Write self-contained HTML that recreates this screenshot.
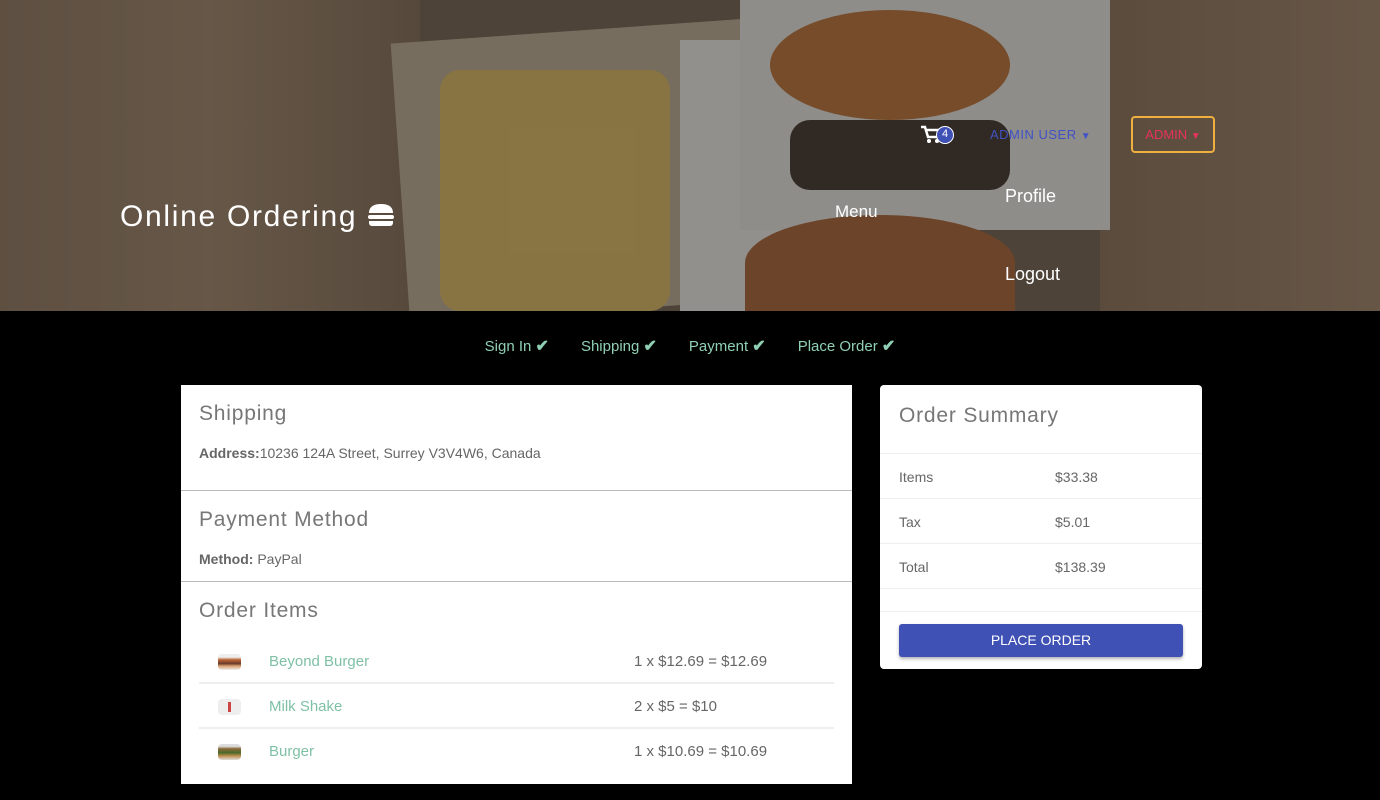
<!DOCTYPE html>
<html><head><meta charset="utf-8"><style>
*{box-sizing:border-box;margin:0;padding:0}
body{width:1380px;height:800px;background:#000;font-family:"Liberation Sans",sans-serif;overflow:hidden;position:relative}
.hero{position:absolute;left:0;top:0;width:1380px;height:311px;overflow:hidden;background:#6e5a45}
.hero div{position:absolute}
.ov{inset:0;background:rgba(40,40,40,.45)}
.nav{position:absolute;color:#fff;font-size:19px}
.steps{position:absolute;top:336px;left:0;width:1380px;text-align:center;color:#8fd0b4;font-size:15px}
.steps span{margin:0 16px}
.steps b{font-size:16px}
.card{position:absolute;background:#fff;color:#777}
h2{font-weight:normal;font-size:21px;color:#777;letter-spacing:.8px}
.row{position:absolute;left:0;width:100%;font-size:15px;color:#666}
</style></head><body>
<div class="hero">
<div style="left:0;top:0;width:420px;height:311px;background:linear-gradient(90deg,#8a7057,#9a7e62 50%,#7d654d)"></div>
<div style="left:1100px;top:0;width:280px;height:311px;background:linear-gradient(90deg,#85694f,#9b7d60)"></div>
<div style="left:400px;top:30px;width:380px;height:281px;background:#b9a68a;transform:rotate(-4deg)"></div>
<div style="left:440px;top:70px;width:230px;height:241px;background:#d8b25a;border-radius:20px"></div>
<div style="left:680px;top:40px;width:110px;height:271px;background:#e8e6df"></div>
<div style="left:740px;top:0;width:370px;height:230px;background:#e2e0da"></div>
<div style="left:770px;top:10px;width:240px;height:110px;background:#b66b2c;border-radius:50%"></div>
<div style="left:790px;top:120px;width:220px;height:70px;background:#3a2a22;border-radius:20px"></div>
<div style="left:745px;top:215px;width:270px;height:96px;background:#a55c2a;border-radius:50% 50% 0 0"></div>
<div class="ov"></div>
</div>
<div class="nav" style="left:120px;top:200px;font-size:30px;letter-spacing:1.7px">Online Ordering <svg width="28" height="24" viewBox="0 0 28 24" style="vertical-align:-1px"><path d="M2 10C2 3 8 1 14 1s12 2 12 9z" fill="#fff"/><rect x="1" y="12" width="26" height="4" rx="2" fill="#fff"/><path d="M2 18h24v2a3 3 0 0 1-3 3H5a3 3 0 0 1-3-3z" fill="#fff"/></svg></div>
<div class="nav" style="left:835px;top:202px;font-size:17px">Menu</div>
<div class="nav" style="left:1005px;top:186px;font-size:18px">Profile</div>
<div class="nav" style="left:1005px;top:264px;font-size:18px">Logout</div>
<svg style="position:absolute;left:921px;top:125px" width="20" height="20" viewBox="0 0 20 20"><path d="M0 2h4l3 10h10l2-7H6" fill="none" stroke="#fff" stroke-width="2.5"/><circle cx="8" cy="16" r="2" fill="#fff"/><circle cx="16" cy="16" r="2" fill="#fff"/></svg>
<div style="position:absolute;left:936px;top:126px;width:18px;height:18px;border-radius:50%;background:#3f51b5;border:1.5px solid #fff;color:#fff;font-size:11px;text-align:center;line-height:15px">4</div>
<div style="position:absolute;left:990px;top:127px;color:#4052c4;font-size:13px;letter-spacing:.5px">ADMIN USER <span style="font-size:10px">▼</span></div>
<div style="position:absolute;left:1131px;top:116px;width:84px;height:37px;border:2px solid #f0b040;border-radius:4px;color:#e8335a;font-size:13px;text-align:center;line-height:33px">ADMIN <span style="font-size:10px">▼</span></div>
<div class="steps"><span>Sign In <b>✔</b></span><span>Shipping <b>✔</b></span><span>Payment <b>✔</b></span><span>Place Order <b>✔</b></span></div>
<div class="card" style="left:181px;top:385px;width:671px;height:399px">
<h2 style="position:absolute;left:18px;top:17px">Shipping</h2>
<div class="row" style="left:18px;top:60px;font-size:14px"><b>Address:</b>10236 124A Street, Surrey V3V4W6, Canada</div>
<div style="position:absolute;left:0;top:105px;width:100%;border-top:1px solid #bbb"></div>
<h2 style="position:absolute;left:18px;top:123px">Payment Method</h2>
<div class="row" style="left:18px;top:166px;font-size:14px"><b>Method:</b> PayPal</div>
<div style="position:absolute;left:0;top:196px;width:100%;border-top:1px solid #bbb"></div>
<h2 style="position:absolute;left:18px;top:214px">Order Items</h2>
<div style="position:absolute;left:37px;top:269px;width:23px;height:16px;border-radius:4px;background:linear-gradient(#eee 20%,#c06a3a 35%,#6a3a2a 60%,#d9a070 75%,#eee)"></div>
<div class="row" style="left:88px;top:268px;color:#7fc0a6;width:auto">Beyond Burger</div>
<div class="row" style="left:453px;top:268px;width:auto">1 x $12.69 = $12.69</div>
<div style="position:absolute;left:18px;top:297px;width:635px;border-top:2px solid #eee"></div>
<div style="position:absolute;left:37px;top:314px;width:23px;height:16px;border-radius:4px;background:#eee"><div style="position:absolute;left:10px;top:3px;width:3px;height:10px;background:#c44"></div></div>
<div class="row" style="left:88px;top:313px;color:#7fc0a6;width:auto">Milk Shake</div>
<div class="row" style="left:453px;top:313px;width:auto">2 x $5 = $10</div>
<div style="position:absolute;left:18px;top:342px;width:635px;border-top:2px solid #eee"></div>
<div style="position:absolute;left:37px;top:359px;width:23px;height:16px;border-radius:4px;background:linear-gradient(#ddd 15%,#8a6a3a 30%,#4a6a2a 55%,#c09050 75%,#ddd)"></div>
<div class="row" style="left:88px;top:358px;color:#7fc0a6;width:auto">Burger</div>
<div class="row" style="left:453px;top:358px;width:auto">1 x $10.69 = $10.69</div>
</div>
<div class="card" style="left:880px;top:385px;width:322px;height:284px;border-radius:4px">
<h2 style="position:absolute;left:19px;top:19px">Order Summary</h2>
<div style="position:absolute;left:0;top:68px;width:100%;border-top:1px solid #eee"></div>
<div class="row" style="left:19px;top:84px;font-size:14px">Items</div><div class="row" style="left:175px;top:84px;font-size:14px">$33.38</div>
<div style="position:absolute;left:0;top:113px;width:100%;border-top:1px solid #eee"></div>
<div class="row" style="left:19px;top:129px;font-size:14px">Tax</div><div class="row" style="left:175px;top:129px;font-size:14px">$5.01</div>
<div style="position:absolute;left:0;top:158px;width:100%;border-top:1px solid #eee"></div>
<div class="row" style="left:19px;top:174px;font-size:14px">Total</div><div class="row" style="left:175px;top:174px;font-size:14px">$138.39</div>
<div style="position:absolute;left:0;top:203px;width:100%;border-top:1px solid #eee"></div>
<div style="position:absolute;left:0;top:226px;width:100%;border-top:1px solid #eee"></div>
<div style="position:absolute;left:19px;top:239px;width:284px;height:33px;background:#3f51b5;border-radius:3px;color:#fff;font-size:14px;text-align:center;line-height:33px;box-shadow:0 2px 3px rgba(0,0,0,.3)">PLACE ORDER</div>
</div>
</body></html>
